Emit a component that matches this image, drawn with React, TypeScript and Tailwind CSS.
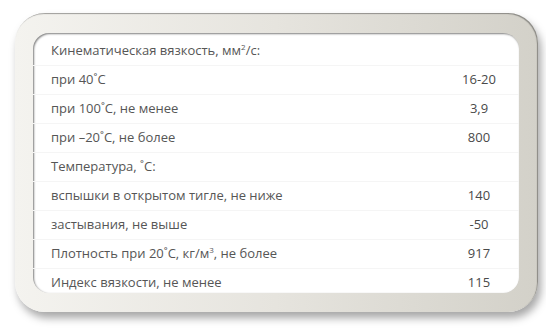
import React from "react";

type Row = {
  label: React.ReactNode;
  value?: string;
};

const rows: Row[] = [
  {
    label: (
      <>
        Кинематическая вязкость, мм<sup className="text-[8px] relative -top-[5px]">2</sup>/с:
      </>
    ),
  },
  { label: "при 40˚С", value: "16-20" },
  { label: "при 100˚С, не менее", value: "3,9" },
  { label: "при –20˚С, не более", value: "800" },
  { label: "Температура, ˚С:" },
  { label: "вспышки в открытом тигле, не ниже", value: "140" },
  { label: "застывания, не выше", value: "-50" },
  {
    label: (
      <>
        Плотность при 20˚С, кг/м<sup className="text-[8px] relative -top-[5px]">3</sup>, не более
      </>
    ),
    value: "917",
  },
  { label: "Индекс вязкости, не менее", value: "115" },
];

export default function App() {
  return (
    <div className="min-h-screen w-[546px] h-[329px] bg-white pl-[15px] pt-[13px] font-['Open_Sans',sans-serif]">
      {/* Bevelled frame */}
      <div className="w-[523px] h-[299px] rounded-[30px] bg-gradient-to-r from-[#f4f3ef] via-[#e6e4de] to-[#d3d1c9] pl-[18px] pr-[19px] pt-[20px] pb-[19px] shadow-[3px_6px_8px_rgba(0,0,0,0.35),inset_-1px_1px_1px_rgba(0,0,0,0.35)]">
        {/* Recessed white panel */}
        <div className="h-full rounded-[16px] bg-white overflow-hidden pt-[4px] shadow-[inset_1px_1px_2px_rgba(0,0,0,0.5)]">
          {rows.map((row, i) => (
            <div
              key={i}
              className="flex items-center h-[29px] pl-[18px] pr-[10px] border-b border-[#f5f5f5] text-[13px] text-[#565656]"
            >
              <span className="flex-1 whitespace-nowrap">{row.label}</span>
              {row.value && <span className="w-[60px] text-center text-[#4a4a4a]">{row.value}</span>}
            </div>
          ))}
        </div>
      </div>
    </div>
  );
}
